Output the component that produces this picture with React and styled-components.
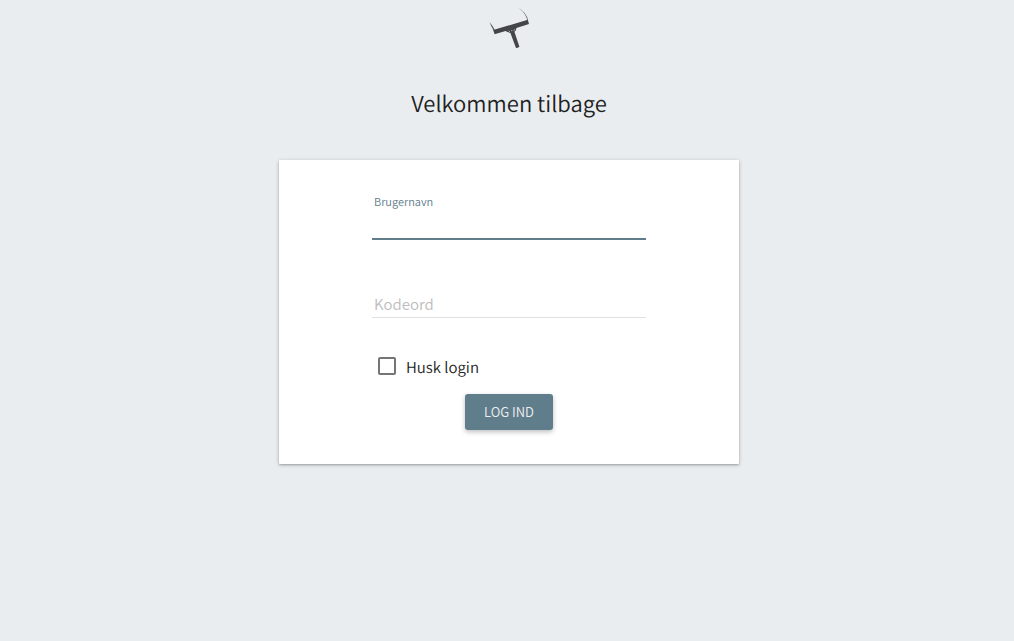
import React from "react";
import styled, { createGlobalStyle } from "styled-components";

const GlobalStyle = createGlobalStyle`
  *, *::before, *::after { box-sizing: border-box; }
  body {
    margin: 0;
    background: #e9edf0;
    color: #212121;
    font-family: "Noto Sans CJK SC", "Noto Sans", sans-serif;
    font-weight: 350;
    text-rendering: geometricPrecision;
  }
`;

const Page = styled.main`
  display: flex;
  flex-direction: column;
  align-items: center;
  padding: 8px 0 32px 4px;
`;

const Logo = styled.svg`
  display: block;
  width: 40px;
  height: 40px;
`;

const Title = styled.h1`
  margin: 37px 0 39px;
  font-size: 22px;
  line-height: 36px;
  font-weight: 350;
`;

const Card = styled.form`
  display: flex;
  flex-direction: column;
  width: 100%;
  max-width: 460px;
  padding: 32px 93px 34px;
  background: #fff;
  border-radius: 1px;
  box-shadow: 0 1px 4px rgba(0, 0, 0, 0.2), 0 1px 2px rgba(0, 0, 0, 0.2);
`;

const Field = styled.div`
  display: flex;
  flex-direction: column;
  margin-bottom: ${(p) => p.$gap}px;
`;

const FieldLabel = styled.label`
  padding: 0 2px;
  color: #607d8b;
  font-size: 11px;
  line-height: 20px;
`;

const Input = styled.input`
  width: 100%;
  height: 28px;
  padding: 0 2px;
  border: 0;
  border-bottom: 1px solid #e0e0e0;
  border-radius: 0;
  outline: 0;
  background: transparent;
  color: inherit;
  font: inherit;
  font-size: 15px;
  line-height: 24px;
  caret-color: transparent;

  &::placeholder {
    color: #bdbdbd;
    opacity: 1;
  }

  &:focus {
    border-bottom: 2px solid #607d8b;
  }
`;

const CheckRow = styled.label`
  display: flex;
  align-items: center;
  align-self: flex-start;
  gap: 10px;
  margin: 0 0 16px 6px;
  font-size: 15px;
  line-height: 24px;
`;

const CheckText = styled.span`
  padding-top: 3px;
  line-height: 21px;
`;

const Checkbox = styled.input`
  appearance: none;
  width: 18px;
  height: 18px;
  margin: 0;
  border: 2px solid #757575;
  border-radius: 2px;

  &:checked {
    border-color: #607d8b;
    background: #607d8b;
  }
`;

const Button = styled.button`
  align-self: center;
  min-width: 88px;
  height: 36px;
  padding: 0 16px;
  border: 0;
  border-radius: 3px;
  background: #607d8b;
  box-shadow: 0 2px 5px rgba(0, 0, 0, 0.26);
  color: #eceff1;
  font: inherit;
  font-size: 13px;
  line-height: 36px;
  text-transform: uppercase;
`;

export default function App() {
  return (
    <>
      <GlobalStyle />
      <Page>
        <Logo viewBox="0 0 40 40" role="img" aria-label="Logo">
          <path d="M0.4 14 Q2.2 18.6 4.8 22.8 L6 22.2 Q3.6 17.6 0.4 14Z" fill="#54565a" />
          <path d="M29.4 0 Q36.6 4.8 38.4 12.8 L39.2 12.4 Q37.4 4.2 29.4 0Z" fill="#77797c" />
          <path d="M4.2 22 L38.8 11.8 L40 16 L27.4 19.9 L26.8 22.4 L25.4 23.8 L30.4 38.8 Q29 40 27 40 L21.4 25 L18.4 24 L16.6 22.9 L5.6 26.2Z" fill="#434548" />
          <path d="M19.6 22.6 L21.2 24.2 M25.6 21 L24.8 22.8" fill="none" stroke="#b5b9bc" strokeWidth="0.8" />
          <circle cx="22.8" cy="22.6" r="0.6" fill="#b5b9bc" />
        </Logo>
        <Title>Velkommen tilbage</Title>
        <Card onSubmit={(e) => e.preventDefault()}>
          <Field $gap={50}>
            <FieldLabel htmlFor="username">Brugernavn</FieldLabel>
            <Input id="username" type="text" autoComplete="username" autoFocus />
          </Field>
          <Field $gap={36}>
            <Input type="password" placeholder="Kodeord" aria-label="Kodeord" autoComplete="current-password" />
          </Field>
          <CheckRow>
            <Checkbox type="checkbox" />
            <CheckText>Husk login</CheckText>
          </CheckRow>
          <Button type="submit">Log ind</Button>
        </Card>
      </Page>
    </>
  );
}
